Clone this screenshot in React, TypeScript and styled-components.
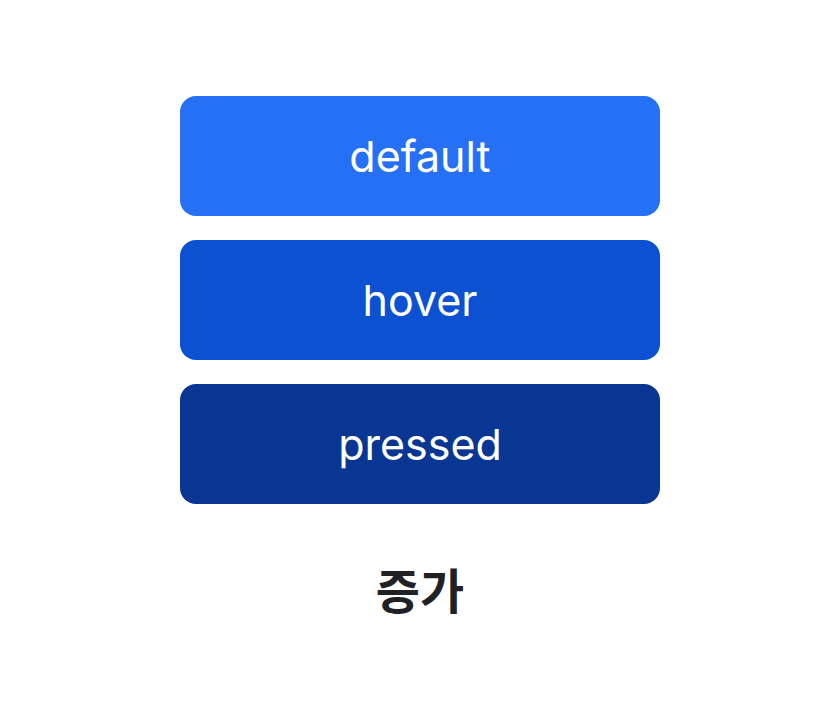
import React from "react";
import styled, { createGlobalStyle } from "styled-components";

const Global = createGlobalStyle`
  html, body { margin: 0; padding: 0; background: #ffffff; }
  body { font-family: Inter, "Noto Sans CJK KR", sans-serif; }
`;

const Page = styled.div`
  width: 840px;
  height: 726px;
  display: flex;
  flex-direction: column;
  align-items: center;
  padding-top: 96px;
  box-sizing: border-box;
`;

const Stack = styled.div`
  display: flex;
  flex-direction: column;
  gap: 24px;
`;

const Button = styled.div<{ $bg: string }>`
  width: 480px;
  height: 120px;
  border-radius: 16px;
  background: ${(p) => p.$bg};
  color: #ffffff;
  display: flex;
  align-items: center;
  justify-content: center;
  font-family: Inter, sans-serif;
  font-size: 43px;
  font-weight: 400;
`;

const Caption = styled.div`
  margin-top: 60px;
  font-family: "Noto Sans CJK KR", sans-serif;
  font-weight: 700;
  font-size: 48px;
  line-height: 1;
  color: #1f2124;
`;

export default function App() {
  return (
    <>
      <Global />
      <Page>
        <Stack>
          <Button $bg="#2670f5">default</Button>
          <Button $bg="#0b51d2">hover</Button>
          <Button $bg="#093692">pressed</Button>
        </Stack>
        <Caption>증가</Caption>
      </Page>
    </>
  );
}
